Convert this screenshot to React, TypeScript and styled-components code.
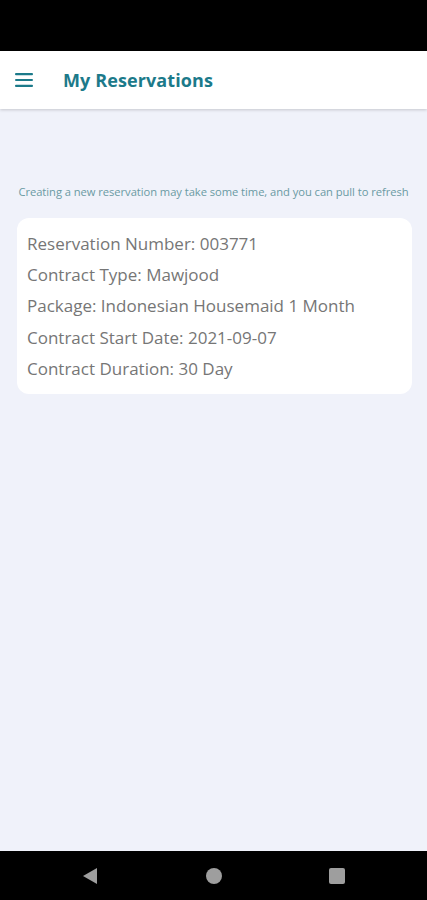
import React from 'react';
import styled, { createGlobalStyle } from 'styled-components';

const GlobalStyle = createGlobalStyle`
  html, body {
    margin: 0;
    padding: 0;
    background: #f0f2fa;
    font-family: "Open Sans", "Noto Sans", sans-serif;
  }
  * { box-sizing: border-box; }
`

interface ReservationInterface {
  number: string;
  type: string;
  pkg: string;
  start: string;
  duration: string;
}

const reservations: ReservationInterface[] = [
  { number: "003771", type: "Mawjood", pkg: "Indonesian Housemaid 1 Month", start: "2021-09-07", duration: "30 Day" },
]

export default function App() {
  return (
    <>
      <GlobalStyle />
      <Screen>
        <StatusBar />
        <AppBar>
          <MenuIcon width="18" height="14" viewBox="0 0 18 14">
            <rect x="0" y="0" width="18" height="2.2" rx="1" />
            <rect x="0" y="5.9" width="18" height="2.2" rx="1" />
            <rect x="0" y="11.8" width="18" height="2.2" rx="1" />
          </MenuIcon>
          <Title>My Reservations</Title>
        </AppBar>
        <Content>
          <Notice>Creating a new reservation may take some time, and you can pull to refresh</Notice>
          {reservations.map((r, i) => (
            <Card key={i}>
              <Line>Reservation Number: {r.number}</Line>
              <Line>Contract Type: {r.type}</Line>
              <Line>Package: {r.pkg}</Line>
              <Line>Contract Start Date: {r.start}</Line>
              <Line>Contract Duration: {r.duration}</Line>
            </Card>
          ))}
        </Content>
        <NavBar>
          <svg width="18" height="18" viewBox="0 0 18 18">
            <path d="M16 1 L16 17 L2 9 Z" fill="#9e9e9e" />
          </svg>
          <Dot />
          <Square />
        </NavBar>
      </Screen>
    </>
  )
}

const Screen = styled.div`
  width: 427px;
  height: 900px;
  display: flex;
  flex-direction: column;
  background: #f0f2fa;
`

const StatusBar = styled.div`
  height: 51px;
  background: #000;
  flex-shrink: 0;
`

const AppBar = styled.div`
  height: 58px;
  background: #fff;
  display: flex;
  align-items: center;
  padding-left: 15px;
  gap: 30px;
  box-shadow: 0 1px 3px rgba(0, 0, 0, 0.18);
  flex-shrink: 0;
  position: relative;
  z-index: 1;
`

const MenuIcon = styled.svg`
  fill: #1c7a8a;
`

const Title = styled.div`
  font-size: 18px;
  font-weight: 700;
  color: #1c7a8a;
  letter-spacing: 0.1px;
`

const Content = styled.div`
  flex: 1;
  padding: 75px 17px 0 17px;
  display: flex;
  flex-direction: column;
  align-items: stretch;
`

const Notice = styled.p`
  margin: 0;
  font-size: 11.2px;
  line-height: 16px;
  color: #6a9aa3;
  text-align: center;
  white-space: nowrap;
  letter-spacing: -0.05px;
`

const Card = styled.div`
  margin-top: 18px;
  background: #fff;
  border-radius: 12px;
  padding: 10px 10px 10px 10px;
  width: 395px;
`

const Line = styled.div`
  font-size: 17px;
  line-height: 31.2px;
  color: #767676;
  white-space: nowrap;
`

const NavBar = styled.div`
  height: 49px;
  background: #000;
  display: flex;
  align-items: center;
  justify-content: space-between;
  padding: 0 82px 0 81px;
  flex-shrink: 0;
`

const Dot = styled.div`
  width: 16px;
  height: 16px;
  border-radius: 50%;
  background: #9e9e9e;
`

const Square = styled.div`
  width: 16px;
  height: 16px;
  border-radius: 2px;
  background: #9e9e9e;
`
